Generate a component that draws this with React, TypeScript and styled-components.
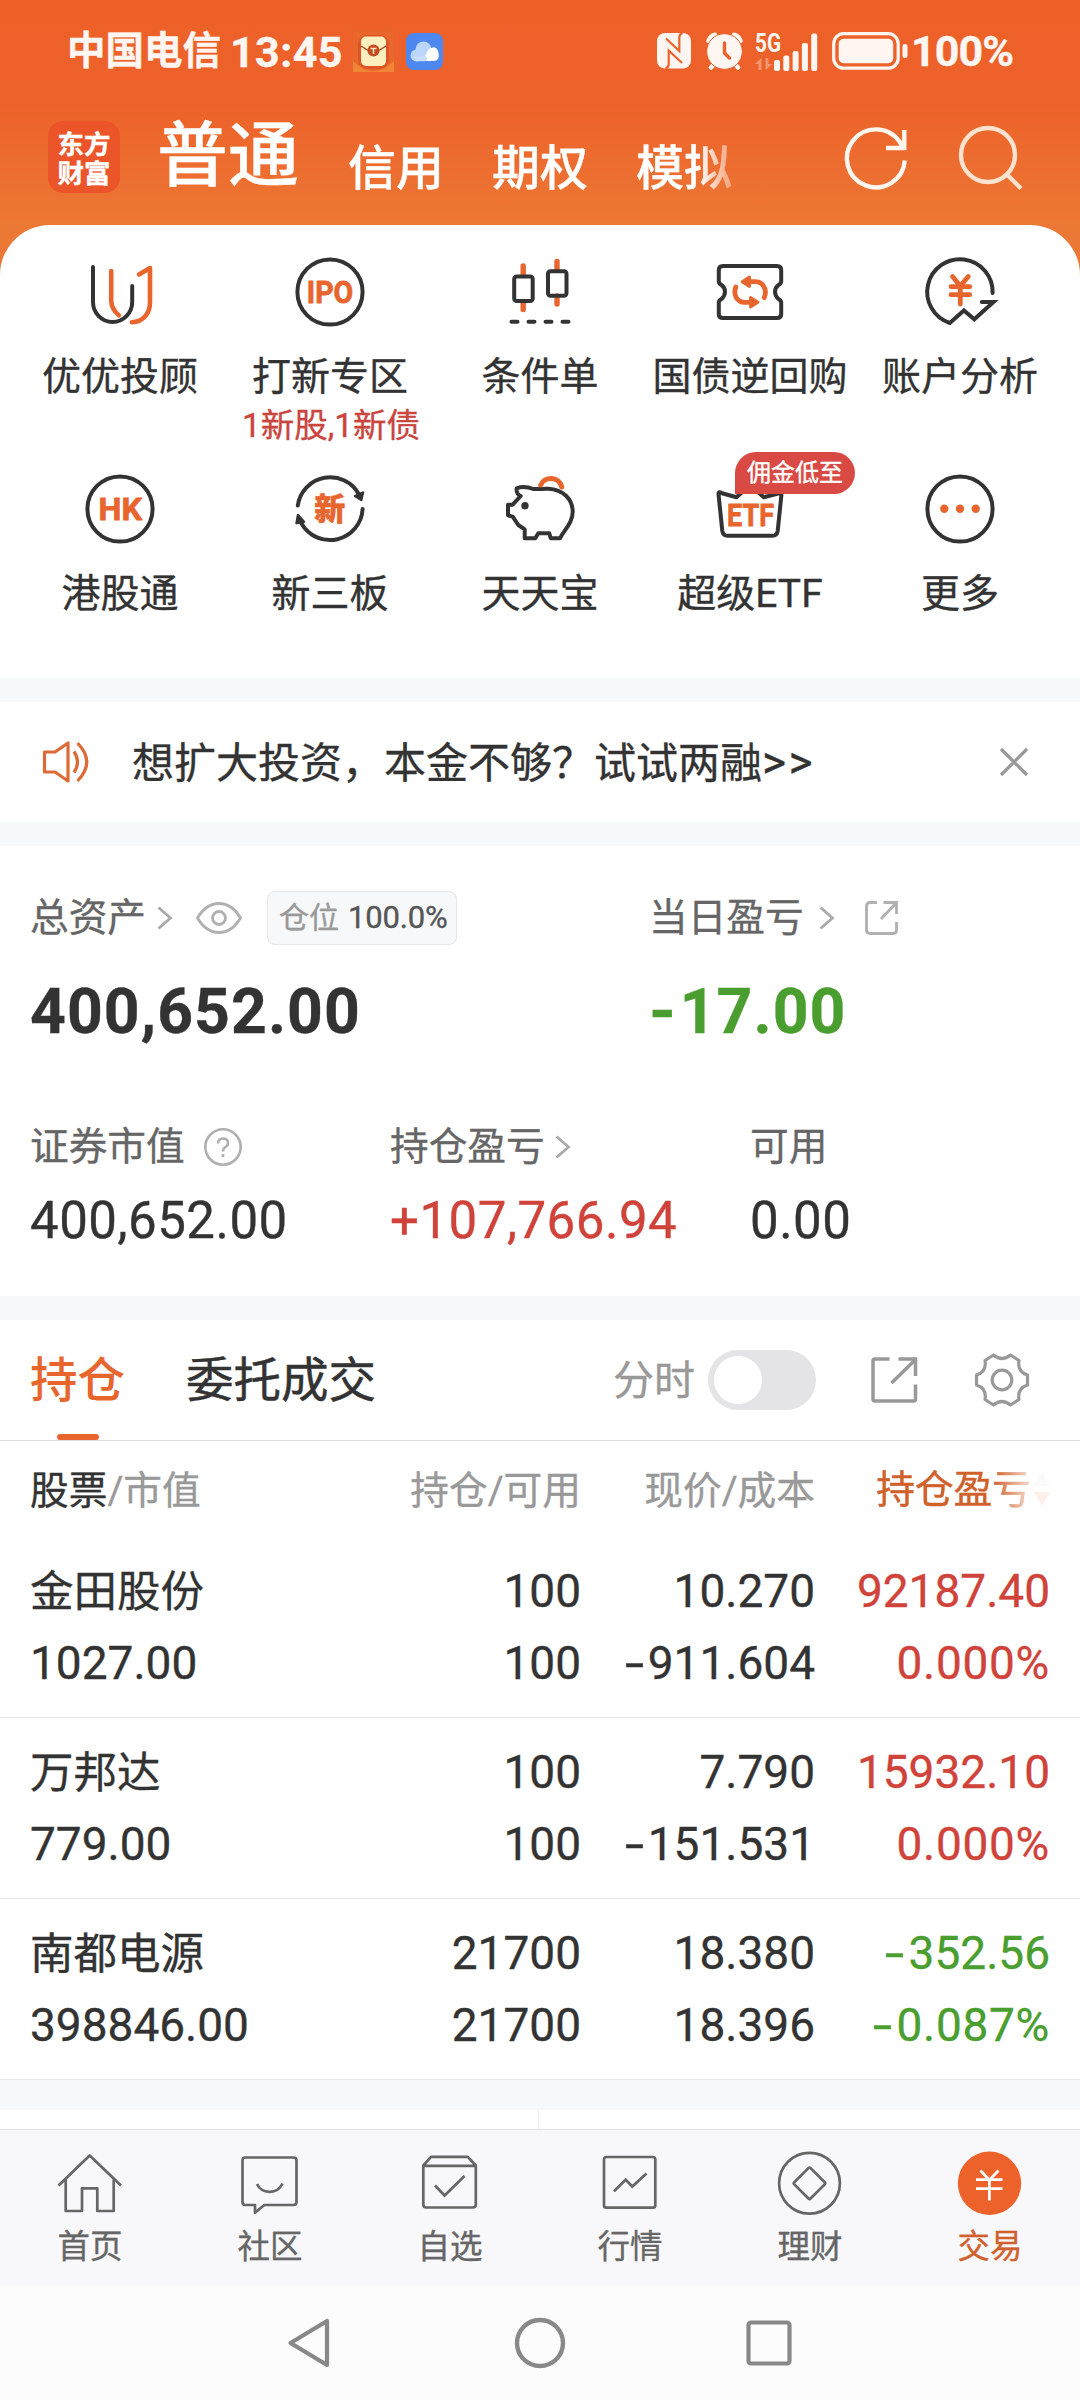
import React from "react";
import styled, { createGlobalStyle, css } from "styled-components";

const INK = "#333333";
const ORANGE = "#e8652e";
const BRAND = "#ed622b";
const RED = "#d0433a";
const GREEN = "#4a9e2f";
const BAND = "#f7f8fa";

const GlobalStyle = createGlobalStyle`
  * { box-sizing: border-box; }
  body {
    margin: 0;
    background: #fff;
    font-family: Roboto, "Noto Sans CJK SC", sans-serif;
    color: ${INK};
    -webkit-text-stroke: 0.35px;
  }
  svg { display: block; flex: none; overflow: visible; }
`;

const Screen = styled.div`
  width: 1080px;
  height: 2400px;
  display: flex;
  flex-direction: column;
  overflow: hidden;
  background: #fff;
`;

/* ---------- top ---------- */
const Header = styled.header`
  height: 275px;
  flex: none;
  margin-bottom: -50px;
  background: linear-gradient(#ed6129 0, #ed622a 105px, #ec7835 225px, #ec7835 275px);
`;

const StatusBar = styled.div`
  height: 102px;
  padding: 0 65px 0 67px;
  display: flex;
  align-items: center;
  color: #fff6f2;
`;

const Carrier = styled.span`
  width: 163px;
  font-size: 38.5px;
  line-height: 50px;
  font-weight: 700;
  white-space: nowrap;
`;

const Clock = styled.span`
  width: 123px;
  padding-top: 2px;
  font-size: 43px;
  line-height: 50px;
  font-weight: 700;
  letter-spacing: 0.4px;
`;

const StatusApps = styled.div`
  display: flex;
  align-items: center;
  gap: 12px;
  flex: 1;
`;

const StatusRight = styled.div`
  display: flex;
  align-items: center;
  height: 40px;
`;

const Spacer = styled.i<{ $w: number }>`
  width: ${(p) => p.$w}px;
  flex: none;
`;

const Percent = styled.span`
  width: 104px;
  font-size: 43px;
  line-height: 50px;
  font-weight: 700;
  letter-spacing: -0.9px;
  white-space: nowrap;
`;

const NavBar = styled.nav`
  height: 110px;
  padding-left: 48px;
  display: flex;
  align-items: flex-start;
  color: #fff;
`;

const Logo = styled.div`
  margin-top: 19px;
  width: 72px;
  height: 72px;
  border-radius: 15px;
  background: #ec5529;
  padding: 7px 0 0 0;
  font-family: "Noto Sans CJK SC", sans-serif;
  font-weight: 700;
  font-size: 26.5px;
  line-height: 29px;
  text-align: center;
  flex: none;
`;

const MainTab = styled.span`
  margin-left: 37px;
  margin-top: 12px;
  width: 191px;
  font-size: 71px;
  line-height: 84px;
  font-weight: 500;
  white-space: nowrap;
`;

const SubTabs = styled.div`
  width: 384px;
  display: flex;
  gap: 48px;
  margin-top: 37px;
  font-size: 48px;
  line-height: 60px;
  font-weight: 500;
  white-space: nowrap;
  mask-image: linear-gradient(90deg, #000 350px, rgba(0, 0, 0, 0.35) 384px);
`;

const HeaderIcons = styled.div`
  display: flex;
  margin: 23px 0 0 111px;
  gap: 46px;
`;

/* ---------- shortcut grid ---------- */
const Shortcuts = styled.section`
  height: 453px;
  flex: none;
  padding: 31px 15px 0;
  border-radius: 50px 50px 0 0;
  background: #fff;
  display: grid;
  grid-template-columns: repeat(5, 210px);
  grid-auto-rows: 217px;
`;

const Shortcut = styled.div`
  position: relative;
  display: flex;
  flex-direction: column;
  align-items: center;
  white-space: nowrap;
`;

const ShortcutLabel = styled.span`
  margin-top: 25px;
  font-size: 39px;
  line-height: 48px;
`;

const ShortcutHint = styled.span`
  margin-top: 5px;
  padding-left: 2px;
  font-size: 33.5px;
  line-height: 40px;
  color: #c9453d;
`;

const Badge = styled.span`
  position: absolute;
  left: 90px;
  top: -21px;
  width: 120px;
  height: 42px;
  border-radius: 21px 21px 21px 0;
  background: #da4a44;
  color: #fff;
  font-size: 24px;
  line-height: 43px;
  text-align: center;
`;

const Band = styled.div<{ $h?: number }>`
  height: ${(p) => p.$h ?? 24}px;
  flex: none;
  background: ${BAND};
`;

/* ---------- notice ---------- */
const Notice = styled.section`
  height: 120px;
  flex: none;
  display: flex;
  align-items: center;
  padding: 0 52px 0 42px;
`;

const NoticeText = styled.span`
  flex: 1;
  margin-left: 41px;
  padding-top: 3px;
  font-size: 42px;
  line-height: 60px;
  white-space: nowrap;
`;

const Arrows = styled.span`
  font-size: 46px;
  line-height: 40px;
  letter-spacing: 2.5px;
`;

/* ---------- assets ---------- */
const Assets = styled.section`
  height: 450px;
  flex: none;
  padding: 44px 30px 0;
`;

const AssetTop = styled.div`
  display: grid;
  grid-template-columns: 619px 1fr;
  height: 229px;
`;

const AssetBottom = styled.div`
  display: grid;
  grid-template-columns: 360px 360px 1fr;
`;

const LabelLine = styled.div`
  display: flex;
  align-items: center;
  height: 56px;
  font-size: 38.7px;
  line-height: 56px;
  color: #666;
  white-space: nowrap;
`;

const Position = styled.span`
  margin-left: 25px;
  width: 190px;
  height: 54px;
  border: 1.5px solid #e6e6e8;
  border-radius: 8px;
  background: #f7f8fa;
  font-size: 30px;
  line-height: 51px;
  padding-left: 11px;
  color: #999;
`;

const PositionValue = styled.span`
  margin-left: 9px;
  font-size: 31px;
  letter-spacing: -0.2px;
  color: #555;
`;

const tone = { ink: INK, red: RED, green: GREEN };
type Tone = keyof typeof tone;

const BigValue = styled.div<{ $tone?: Tone }>`
  margin-top: 30px;
  font-size: 62.5px;
  line-height: 72px;
  font-weight: 700;
  letter-spacing: 1.05px;
  color: ${(p) => tone[p.$tone ?? "ink"]};
`;

const Value = styled.div<{ $tone?: Tone }>`
  margin-top: 16px;
  font-size: 51px;
  line-height: 60px;
  letter-spacing: 0.5px;
  color: ${(p) => tone[p.$tone ?? "ink"]};
`;

const Minus = styled.span<{ $gap: number; $stretch: number }>`
  display: inline-block;
  margin-right: ${(p) => p.$gap}px;
  transform: scaleX(${(p) => p.$stretch});
  transform-origin: left center;
`;

/* ---------- holdings ---------- */
const HoldTabs = styled.section`
  height: 121px;
  flex: none;
  display: flex;
  align-items: center;
  padding: 0 51px 0 30px;
  border-bottom: 1px solid #dedede;
  white-space: nowrap;
`;

const HoldTab = styled.span<{ $active?: boolean }>`
  position: relative;
  height: 120px;
  font-size: 47.5px;
  line-height: 123px;
  font-weight: ${(p) => (p.$active ? 500 : 400)};
  -webkit-text-stroke: ${(p) => (p.$active ? "0" : "0.5px")};
  color: ${(p) => (p.$active ? ORANGE : INK)};
  margin-right: 61px;
  ${(p) =>
    p.$active &&
    css`
      &::after {
        content: "";
        position: absolute;
        left: 27px;
        bottom: 0;
        width: 42px;
        height: 6px;
        border-radius: 3px;
        background: ${ORANGE};
      }
    `}
`;

const MinuteLabel = styled.span`
  margin-left: auto;
  padding-top: 2px;
  font-size: 41px;
  line-height: 60px;
  color: #999;
`;

const Toggle = styled.span`
  margin: 0 55px 0 13px;
  width: 108px;
  height: 60px;
  border-radius: 30px;
  background: #e4e4e6;
  padding: 6px;
  &::after {
    content: "";
    display: block;
    width: 48px;
    height: 48px;
    border-radius: 50%;
    background: #fff;
  }
`;

const columns = css`
  display: grid;
  grid-template-columns: 300px 251px 234px 235px;
  padding-left: 30px;
`;

const TableHead = styled.div`
  ${columns}
  height: 96px;
  flex: none;
  font-size: 38.7px;
  line-height: 99px;
  color: #999;
  white-space: nowrap;
`;

const Right = styled.span`
  text-align: right;
`;

const SortHead = styled.span`
  height: 96px;
  display: flex;
  align-items: center;
  justify-content: flex-end;
  gap: 1px;
  color: #d0612c;
  -webkit-text-stroke: 0.5px #d0612c;
  margin-right: -2px;
  mask-image: linear-gradient(90deg, #000 178px, rgba(0, 0, 0, 0.1) 222px);
`;

const Dark = styled.span`
  color: ${INK};
`;

const Row = styled.div`
  ${columns}
  height: 181px;
  flex: none;
  padding-top: 18px;
  border-bottom: 1px solid #e8e8e8;
  white-space: nowrap;
`;

const Cell = styled.div<{ $tone?: Tone; $left?: boolean }>`
  display: flex;
  flex-direction: column;
  text-align: ${(p) => (p.$left ? "left" : "right")};
  font-size: 46px;
  line-height: 72px;
  color: ${(p) => tone[p.$tone ?? "ink"]};
`;

const StockName = styled.span`
  height: 72px;
  font-size: 43.5px;
  line-height: 75px;
`;

const Rate = styled.span`
  letter-spacing: 0.7px;
`;

const NextCard = styled.div`
  height: 19px;
  flex: none;
  display: grid;
  grid-template-columns: 539px 1fr;
  &::before {
    content: "";
    border-right: 1px solid #f0f0f0;
  }
`;

/* ---------- bottom ---------- */
const TabBar = styled.nav`
  height: 157px;
  flex: none;
  display: grid;
  grid-template-columns: repeat(6, 180px);
  background: #f8f8fa;
  border-top: 1px solid #e2e2e4;
`;

const TabItem = styled.div<{ $active?: boolean }>`
  display: flex;
  flex-direction: column;
  align-items: center;
  padding-top: 20px;
  font-size: 32.5px;
  line-height: 40px;
  gap: 11px;
  color: ${(p) => (p.$active ? "#d0612c" : "#666")};
`;

const SystemNav = styled.div`
  flex: 1;
  display: flex;
  justify-content: center;
  gap: 180px;
  padding-top: 31px;
  background: #fcfcfc;
`;

/* ---------- icon helpers ---------- */
const Glyph = ({ children }: { children: React.ReactNode }) => (
  <svg width="72" height="72" viewBox="0 0 72 72" fill="none" stroke={INK} strokeWidth="4" strokeLinecap="round" strokeLinejoin="round">
    {children}
  </svg>
);

const GlyphText = ({ x, y, w, size, children }: { x: number; y: number; w: number; size: number; children: string }) => (
  <text x={x} y={y} textLength={w} lengthAdjust="spacingAndGlyphs" fontSize={size} fontWeight="700" fill={ORANGE} stroke={ORANGE} strokeWidth="0.8">
    {children}
  </text>
);

const icons = {
  advisor: (
    <Glyph>
      <path d="M9 11V46A19.6 20 0 0 0 48.2 46V30" />
      <g stroke={ORANGE} strokeWidth="4.6">
        <path d="M27.2 15V44Q27.2 53 34.8 59.3" />
        <path d="M47.8 66.3C60 65.5 66 57 66 46V12L55 18.4" />
      </g>
    </Glyph>
  ),
  ipo: (
    <Glyph>
      <circle cx="36" cy="36" r="32.6" />
      <GlyphText x={12.8} y={46.8} w={46.4} size={31}>IPO</GlyphText>
    </Glyph>
  ),
  candles: (
    <Glyph>
      <g stroke={ORANGE} strokeWidth="5.4">
        <path d="M19.2 10V19M19.2 46V53.5M53 5.500V14M53 40V48" />
      </g>
      <rect x="10.200" y="20.500" width="18.500" height="24.500" rx="2.500" />
      <rect x="44" y="15.200" width="18.500" height="24.500" rx="2.500" />
      <path d="M7.500 65.700H13.500M24.500 65.700H30.500M41.500 65.700H47.500M58.500 65.700H64.500" />
    </Glyph>
  ),
  repo: (
    <Glyph>
      <path d="M9 10H63Q67.200 10 67.200 14V25.500Q67.200 27.500 64.500 29Q61 31.500 61 35.800Q61 40 64.500 43Q67.200 44.500 67.200 46.500V58Q67.200 62 63 62H9Q4.800 62 4.800 58V46.500Q4.800 44.500 7.500 43Q11 40 11 35.800Q11 31.500 7.500 29Q4.800 27.500 4.800 25.500V14Q4.800 10 9 10Z" />
      <g stroke={ORANGE} strokeWidth="4.800">
        <path d="M21.800 31C19 38 22.500 46.300 31 46.300H37" />
        <path d="M50.300 41.500C53.500 34 49.500 25.700 41 25.700H36" />
        <path d="M36.500 41.500V51L44 46.300ZM35.500 21V30.500L28 25.700Z" fill={ORANGE} strokeWidth="2.800" />
      </g>
    </Glyph>
  ),
  account: (
    <Glyph>
      <path d="M68.600 37A32.700 32.700 0 1 0 25.800 67L39.900 54.500L50.300 63.300L69.500 46H57.800" strokeLinejoin="miter" />
      <g stroke={ORANGE} strokeWidth="4.800">
        <path d="M28.500 20.500L36.300 30L44.300 20.500M36.300 30V48M27 30.700H45.700M27 38.700H45.700" />
      </g>
    </Glyph>
  ),
  hk: (
    <Glyph>
      <circle cx="36" cy="36" r="32.600" />
      <GlyphText x={14.500} y={47.200} w={43.500} size={32}>HK</GlyphText>
    </Glyph>
  ),
  neeq: (
    <Glyph>
      <path d="M3.800 32.500A32.700 32.700 0 0 1 65 21.500M68.600 36A32.700 32.700 0 0 1 7.500 50.500" />
      <path d="M61 23L69 19.500L67.300 27ZM4 42L2.500 50L10 48.700Z" fill={INK} strokeWidth="2.400" />
      <text x="20.300" y="47" fontSize="31" fontWeight="900" fill={ORANGE} stroke={ORANGE} strokeWidth="0.600">新</text>
    </Glyph>
  ),
  piggy: (
    <Glyph>
      <path d="M12.700 15.300Q20 12.500 29.300 16C34 16.500 39 15.500 44.300 15.700C59 16.500 68.700 26 68.700 38.700C68.700 50 60.500 56.500 56 65.300H46.700L45.300 60.300H34.300L31.300 65.300H20.700V56.300L14.300 52L8.700 43.700L4 42.300V31.700H8.700L16.700 23Q12 21 12.700 15.300Z" />
      <circle cx="21" cy="32.700" r="3.700" fill={INK} stroke="none" />
      <path d="M36.700 12A11 10.500 0 0 1 57.700 14" stroke={ORANGE} strokeWidth="5" />
    </Glyph>
  ),
  etf: (
    <Glyph>
      <path d="M8 20.300L22.500 24.300L36 12L49.800 24.300L65 20.300Q68 19 67.300 23L63.700 58Q63 62.800 58.500 62.800H13.500Q9 62.800 8.300 58L4.500 21Q4.500 18 8 20.300Z" />
      <GlyphText x={13} y={53.2} w={47} size={32}>ETF</GlyphText>
    </Glyph>
  ),
  more: (
    <Glyph>
      <circle cx="36" cy="36" r="32.600" />
      <g fill={ORANGE} stroke="none">
        <circle cx="20.300" cy="35.800" r="4.200" />
        <circle cx="36" cy="35.800" r="4.200" />
        <circle cx="51.700" cy="35.800" r="4.200" />
      </g>
    </Glyph>
  ),
};

const shortcuts: { icon: keyof typeof icons; label: string; hint?: string; badge?: string }[] = [
  { icon: "advisor", label: "优优投顾" },
  { icon: "ipo", label: "打新专区", hint: "1新股,1新债" },
  { icon: "candles", label: "条件单" },
  { icon: "repo", label: "国债逆回购" },
  { icon: "account", label: "账户分析" },
  { icon: "hk", label: "港股通" },
  { icon: "neeq", label: "新三板" },
  { icon: "piggy", label: "天天宝" },
  { icon: "etf", label: "超级ETF", badge: "佣金低至" },
  { icon: "more", label: "更多" },
];

const ChevronIcon = styled.svg<{ $ml: number }>`
  margin-left: ${(p) => p.$ml}px;
`;

const Chevron = ({ ml }: { ml: number }) => (
  <ChevronIcon $ml={ml} width="16" height="24" viewBox="0 0 16 24" fill="none" stroke="#aaa" strokeWidth="2.800">
    <path d="M1.500 1.500L13.500 12L1.500 22.500" />
  </ChevronIcon>
);

const TabGlyph = ({ children }: { children: React.ReactNode }) => (
  <svg width="66" height="66" viewBox="0 0 66 66" fill="none" stroke="#666" strokeWidth="2.700" strokeLinejoin="round">
    {children}
  </svg>
);

const tabs: { label: string; active?: boolean; icon: React.ReactNode }[] = [
  {
    label: "首页",
    icon: (
      <TabGlyph>
        <path d="M1.500 35.500L32.700 5.500L64 35.500M8.700 29.500V61H25V38.300H40.300V61H56.700V29.500" />
      </TabGlyph>
    ),
  },
  {
    label: "社区",
    icon: (
      <TabGlyph>
        <path d="M8.300 7.500H56.500Q59.500 7.500 59.500 10.500V52Q59.500 55 56.500 55H27.300L18 62.800V55H8.300Q5.500 55 5.500 52V10.500Q5.500 7.500 8.300 7.500Z" />
        <path d="M20 34C25 44.500 40.500 44.500 45.500 33.500" />
      </TabGlyph>
    ),
  },
  {
    label: "自选",
    icon: (
      <TabGlyph>
        <path d="M6.300 15.500L14 6.800H50.800L58.800 15.500V54.500Q58.800 57.500 55.800 57.500H9.300Q6.300 57.500 6.300 54.500ZM6.300 15.800H58.800" />
        <path d="M18 35.500L27.600 45.500L47.500 26" strokeLinejoin="miter" />
      </TabGlyph>
    ),
  },
  {
    label: "行情",
    icon: (
      <TabGlyph>
        <rect x="7" y="7" width="51.300" height="50.700" rx="2.500" />
        <path d="M17 41.300L28.700 29.700L35.300 36.500L49.500 23.500" strokeLinejoin="miter" />
      </TabGlyph>
    ),
  },
  {
    label: "理财",
    icon: (
      <TabGlyph>
        <circle cx="32.500" cy="33.300" r="30.400" />
        <rect x="21" y="21.800" width="23" height="23" rx="1.500" transform="rotate(45 32.500 33.300)" />
      </TabGlyph>
    ),
  },
  {
    label: "交易",
    active: true,
    icon: (
      <TabGlyph>
        <circle cx="32.500" cy="33.300" r="31.700" fill={BRAND} stroke="none" />
        <path d="M23.400 20.500L32.400 30L41.500 20.500M32.400 30V50.500M19 29.700H45.500M19 38.700H45.500" stroke="#fff" />
      </TabGlyph>
    ),
  },
];

type Holding = { name: string; value: string; qty: string; price: string; cost: string; gain: string; rate: string; tone: Tone };

const holdings: Holding[] = [
  { name: "金田股份", value: "1027.00", qty: "100", price: "10.270", cost: "-911.604", gain: "92187.40", rate: "0.000%", tone: "red" },
  { name: "万邦达", value: "779.00", qty: "100", price: "7.790", cost: "-151.531", gain: "15932.10", rate: "0.000%", tone: "red" },
  { name: "南都电源", value: "398846.00", qty: "21700", price: "18.380", cost: "18.396", gain: "-352.56", rate: "-0.087%", tone: "green" },
];

const Signed = ({ children, gap = 10.5, stretch = 1.5 }: { children: string; gap?: number; stretch?: number }) =>
  children.startsWith("-") ? (
    <span>
      <Minus $gap={gap} $stretch={stretch}>-</Minus>
      {children.slice(1)}
    </span>
  ) : (
    <span>{children}</span>
  );

const LineIcon = styled.svg<{ $ml: number }>`
  margin-left: ${(p) => p.$ml}px;
`;

const StatusIcons = () => (
  <StatusRight>
    <svg width="34" height="36" viewBox="0 0 34 36">
      <rect width="34" height="35.500" rx="8" fill="#fff6f2" />
      <path d="M8.500 35.500Q11.700 34.500 11.700 31V17.500L25 30M25.500 0Q22.300 1 22.300 4.500V18L9 5.500" fill="none" stroke={BRAND} strokeWidth="2.200" />
    </svg>
    <Spacer $w={15} />
    <svg width="37" height="38" viewBox="0 0 37 38">
      <g fill="none" stroke="#fff6f2" strokeWidth="4.500" strokeLinecap="round">
        <path d="M2.500 9Q4 4 9 2.800M34.500 9Q33 4 28 2.800" />
        <path d="M9 31L5 35.500M28 31L32 35.500" />
      </g>
      <circle cx="18.500" cy="19.500" r="17.800" fill="#fff6f2" stroke={BRAND} strokeWidth="1" />
      <path d="M18.500 11V21L23.500 26" fill="none" stroke={BRAND} strokeWidth="3.400" strokeLinecap="round" />
    </svg>
    <Spacer $w={12} />
    <svg width="63" height="39" viewBox="0 0 63 39" fill="#fff6f2">
      <text x="0" y="20" fontSize="26" fontWeight="700" textLength="26" lengthAdjust="spacingAndGlyphs">5G</text>
      <path d="M0 32L6.500 26V38H3.500V32ZM17.500 32L10.500 38V26H13.500V32Z" opacity="0.350" />
      <rect x="19" y="28" width="6" height="11" rx="2" />
      <rect x="28.300" y="23.500" width="6" height="15.500" rx="2" />
      <rect x="37.600" y="19" width="6" height="20" rx="2" />
      <rect x="46.900" y="11" width="6" height="28" rx="2" />
      <rect x="56.200" y="1.500" width="6" height="37.500" rx="2" />
    </svg>
    <Spacer $w={14} />
    <svg width="77" height="38" viewBox="0 0 77 38">
      <rect x="1.700" y="1.700" width="64.500" height="34.500" rx="10" fill="none" stroke="#fff6f2" strokeWidth="3.200" />
      <rect x="6.700" y="6.700" width="54.500" height="24.500" rx="5" fill="#fff6f2" />
      <rect x="70.500" y="12" width="5" height="14" rx="2.500" fill="#fff6f2" />
    </svg>
    <Spacer $w={2} />
    <Percent>100%</Percent>
  </StatusRight>
);

export default function App() {
  return (
    <Screen>
      <GlobalStyle />
      <Header>
        <StatusBar>
          <Carrier>中国电信</Carrier>
          <Clock>13:45</Clock>
          <StatusApps>
            <svg width="41" height="41" viewBox="0 0 41 41">
              <rect width="41" height="41" fill="#e9672b" />
              <path d="M0 30Q20 50 41 30V41H0Z" fill="#f08535" />
              <rect x="5" y="4" width="31" height="34" rx="9" fill="#df5424" />
              <rect x="8" y="5.500" width="25" height="29.500" rx="5" fill="#fceebd" />
              <path d="M8 15L16 20H25L33 15" fill="none" stroke="#b8431f" strokeWidth="1.400" />
              <circle cx="20.500" cy="19.500" r="6" fill="#c44a22" />
              <path d="M17.500 17.500H23.500M20.500 17.500V23" stroke="#fceebd" strokeWidth="1.500" />
            </svg>
            <svg width="37" height="37" viewBox="0 0 37 37">
              <rect width="37" height="37" rx="8" fill="#4d88f0" />
              <g fill="#bcd5fb">
                <circle cx="17.500" cy="16.500" r="8" />
                <circle cx="10.500" cy="22.500" r="6" />
              </g>
              <path d="M14 28Q20 23 22 17Q29 11 32 18Q35 28 27 28Z" fill="#fff" />
              <rect x="9" y="23" width="12" height="5.300" rx="2.500" fill="#c8dcfc" />
            </svg>
          </StatusApps>
          <StatusIcons />
        </StatusBar>
        <NavBar>
          <Logo>
            东方
            <br />
            财富
          </Logo>
          <MainTab>普通</MainTab>
          <SubTabs>
            <span>信用</span>
            <span>期权</span>
            <span>模拟</span>
          </SubTabs>
          <HeaderIcons>
            <svg width="68" height="68" viewBox="0 0 68 68" fill="none" stroke="#fff6ee" strokeWidth="4.400">
              <path d="M61.800 35.500A29 29 0 1 1 56.500 16.500L60 23M61.300 5V23H43" />
            </svg>
            <svg width="68" height="68" viewBox="0 0 68 68" fill="none" stroke="#ffe3cf" strokeWidth="4.400">
              <circle cx="31" cy="30" r="27" />
              <path d="M49.500 49L64 63.500" />
            </svg>
          </HeaderIcons>
        </NavBar>
      </Header>

      <Shortcuts>
        {shortcuts.map((s) => (
          <Shortcut key={s.label}>
            {icons[s.icon]}
            <ShortcutLabel>{s.label}</ShortcutLabel>
            {s.hint && <ShortcutHint>{s.hint}</ShortcutHint>}
            {s.badge && <Badge>{s.badge}</Badge>}
          </Shortcut>
        ))}
      </Shortcuts>

      <Band />
      <Notice>
        <svg width="49" height="42" viewBox="0 0 49 42" fill="none" stroke="#dd6b37" strokeWidth="3.200">
          <path d="M2.500 11H13L26 2V40L13 31H2.500Z" strokeLinejoin="round" />
          <path d="M32 10.500Q39 21 32 31.500M35.500 2Q54 21 35.500 40" />
        </svg>
        <NoticeText>
          想扩大投资，本金不够？试试两融<Arrows>&gt;&gt;</Arrows>
        </NoticeText>
        <svg width="28" height="28" viewBox="0 0 28 28" fill="none" stroke="#999" strokeWidth="3.200">
          <path d="M1 1L27 27M27 1L1 27" />
        </svg>
      </Notice>
      <Band />

      <Assets>
        <AssetTop>
          <div>
            <LabelLine>
              总资产
              <Chevron ml={11} />
              <LineIcon $ml={23} width="46" height="32" viewBox="0 0 46 32" fill="none" stroke="#b0b0b0" strokeWidth="2.800">
                <path d="M1.500 16Q10 1.500 23 1.500T44.500 16Q36 30.500 23 30.500T1.500 16Z" />
                <circle cx="23" cy="16" r="6.500" />
              </LineIcon>
              <Position>
                仓位<PositionValue>100.0%</PositionValue>
              </Position>
            </LabelLine>
            <BigValue>400,652.00</BigValue>
          </div>
          <div>
            <LabelLine>
              当日盈亏
              <Chevron ml={15} />
              <LineIcon $ml={30} width="34" height="34" viewBox="0 0 34 34" fill="none" stroke="#b0b0b0" strokeWidth="2.800">
                <path d="M12 1.500H5Q1.500 1.500 1.500 5V29Q1.500 32.500 5 32.500H28Q31.500 32.500 31.500 29V21M18.500 1.500H31.500V13M31 2L16 18" />
              </LineIcon>
            </LabelLine>
            <BigValue $tone="green">
              <Signed gap={5} stretch={1.1}>-17.00</Signed>
            </BigValue>
          </div>
        </AssetTop>
        <AssetBottom>
          <div>
            <LabelLine>
              证券市值
              <LineIcon $ml={19} width="38" height="38" viewBox="0 0 38 38" fill="none" stroke="#b0b0b0" strokeWidth="2.600">
                <circle cx="19" cy="19" r="17.700" />
                <path d="M14 15.500Q14 10.500 19 10.500T24 15Q24 17.500 21.500 19Q19 20.500 19 23.500M19 26V29" />
              </LineIcon>
            </LabelLine>
            <Value>400,652.00</Value>
          </div>
          <div>
            <LabelLine>
              持仓盈亏
              <Chevron ml={10} />
            </LabelLine>
            <Value $tone="red">+107,766.94</Value>
          </div>
          <div>
            <LabelLine>可用</LabelLine>
            <Value>0.00</Value>
          </div>
        </AssetBottom>
      </Assets>
      <Band />

      <HoldTabs>
        <HoldTab $active>持仓</HoldTab>
        <HoldTab>委托成交</HoldTab>
        <MinuteLabel>分时</MinuteLabel>
        <Toggle />
        <svg width="46" height="46" viewBox="0 0 46 46" fill="none" stroke="#999" strokeWidth="3.500">
          <path d="M18.500 2H4Q2 2 2 4V42Q2 44 4 44H42.500Q44.500 44 44.500 42V27.500M27.500 2H44.500V19M44 3L20.500 26" />
        </svg>
        <Spacer $w={58} />
        <svg width="54" height="54" viewBox="0 0 54 54" fill="none" stroke="#999" strokeWidth="3.200" strokeLinejoin="round">
          <path d="M10 7.500L18.500 2Q27 9 35.500 2L44 7.500Q42 18.500 52.500 22V32Q42 35.500 44 46.500L35.500 52Q27 45 18.500 52L10 46.500Q12 35.500 1.500 32V22Q12 18.500 10 7.500Z" />
          <circle cx="27" cy="27" r="9.800" />
        </svg>
      </HoldTabs>

      <TableHead>
        <span>
          <Dark>股票</Dark>/市值
        </span>
        <Right>持仓/可用</Right>
        <Right>现价/成本</Right>
        <SortHead>
          持仓盈亏
          <svg width="20" height="36" viewBox="0 0 20 36" stroke="none">
            <path d="M2 15L10 1L18 15Z" fill="#ccc" />
            <path d="M2 21L10 35L18 21Z" fill="#e8652e" />
          </svg>
        </SortHead>
      </TableHead>

      {holdings.map((h) => (
        <Row key={h.name}>
          <Cell $left>
            <StockName>{h.name}</StockName>
            <span>{h.value}</span>
          </Cell>
          <Cell>
            <span>{h.qty}</span>
            <span>{h.qty}</span>
          </Cell>
          <Cell>
            <span>{h.price}</span>
            <Signed>{h.cost}</Signed>
          </Cell>
          <Cell $tone={h.tone}>
            <Signed>{h.gain}</Signed>
            <Rate>
              <Signed>{h.rate}</Signed>
            </Rate>
          </Cell>
        </Row>
      ))}
      <Band $h={30} />
      <NextCard />

      <TabBar>
        {tabs.map((t) => (
          <TabItem key={t.label} $active={t.active}>
            {t.icon}
            {t.label}
          </TabItem>
        ))}
      </TabBar>

      <SystemNav>
        <svg width="46" height="52" viewBox="2.500 0 46 52" fill="none" stroke="#888" strokeWidth="4.200" strokeLinejoin="round">
          <path d="M41.500 4V48L5 26Z" />
        </svg>
        <svg width="52" height="52" viewBox="0 0 52 52" fill="none" stroke="#888" strokeWidth="4.400">
          <circle cx="26" cy="26" r="23" />
        </svg>
        <svg width="46" height="52" viewBox="0 0 46 52" fill="none" stroke="#888" strokeWidth="4.200">
          <rect x="2.500" y="5.500" width="41" height="41" rx="2.500" />
        </svg>
      </SystemNav>
    </Screen>
  );
}
